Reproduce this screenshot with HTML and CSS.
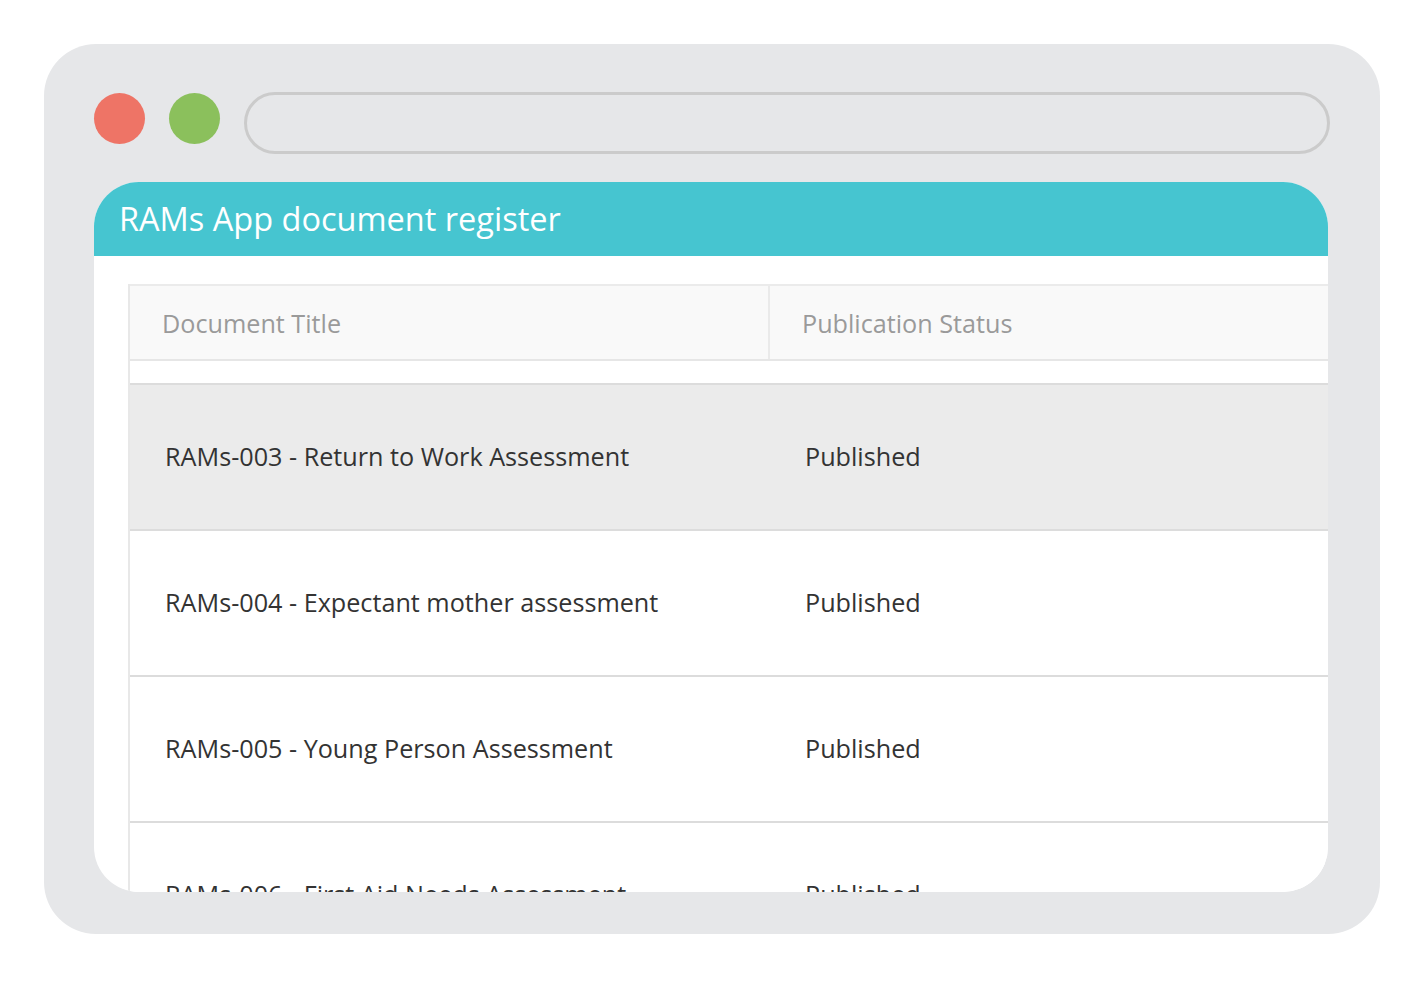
FILE: index.html
```html
<!DOCTYPE html>
<html lang="en">
<head>
<meta charset="utf-8">
<title>RAMs App document register</title>
<link rel="stylesheet" href="styles.css">
</head>
<body>
<div class="frame">
  <div class="topbar">
    <span class="dot dot-red"></span>
    <span class="dot dot-green"></span>
    <div class="address"></div>
  </div>
  <div class="card">
    <div class="card-head">RAMs App document register</div>
    <div class="card-body">
      <div class="table">
        <div class="thead">
          <div class="th th-title">Document Title</div>
          <div class="th th-status">Publication Status</div>
        </div>
        <div class="spacer"></div>
        <div class="row row-hover">
          <div class="td td-title">RAMs-003 - Return to Work Assessment</div>
          <div class="td td-status">Published</div>
        </div>
        <div class="row">
          <div class="td td-title">RAMs-004 - Expectant mother assessment</div>
          <div class="td td-status">Published</div>
        </div>
        <div class="row">
          <div class="td td-title">RAMs-005 - Young Person Assessment</div>
          <div class="td td-status">Published</div>
        </div>
        <div class="row">
          <div class="td td-title">RAMs-006 - First Aid Needs Assessment</div>
          <div class="td td-status">Published</div>
        </div>
      </div>
    </div>
  </div>
</div>
</body>
</html>
```
FILE: styles.css
```css
* { box-sizing: border-box; }
html, body { margin: 0; padding: 0; background: #ffffff; }
body { font-family: "Open Sans", "Noto Sans", sans-serif; }

.frame {
  margin: 44px 0 0 44px;
  width: 1336px;
  height: 890px;
  background: #e6e7e9;
  border-radius: 52px;
  padding: 48px 52px 42px 50px;
  display: flex;
  flex-direction: column;
}

.topbar {
  display: flex;
  align-items: flex-start;
  height: 62px;
  flex: 0 0 auto;
}
.dot {
  width: 51px;
  height: 51px;
  border-radius: 50%;
  margin-top: 1px;
  flex: 0 0 auto;
}
.dot-red { background: #ee7466; }
.dot-green { background: #8bc05c; margin-left: 24px; }
.address {
  margin-left: 24px;
  flex: 1 1 auto;
  margin-right: -2px;
  height: 62px;
  border: 3px solid #cbcbcb;
  border-radius: 31px;
}

.card {
  margin-top: 28px;
  flex: 1 1 auto;
  background: #ffffff;
  border-radius: 45px;
  overflow: hidden;
  display: flex;
  flex-direction: column;
}
.card-head {
  height: 74px;
  background: #46c5d0;
  color: #ffffff;
  font-size: 32.5px;
  line-height: 74px;
  padding-left: 25px;
  flex: 0 0 auto;
}
.card-body {
  padding: 28px 0 0 34px;
}

.table {
  border-left: 2px solid #e8e8e8;
}
.thead {
  display: flex;
  height: 77px;
  background: #f9f9f9;
  border-top: 2px solid #ebebeb;
  border-bottom: 2px solid #e6e6e6;
}
.th {
  display: flex;
  align-items: center;
  font-size: 25.2px;
  color: #9a9a9a;
}
.th-title {
  width: 640px;
  padding-left: 32px;
  border-right: 2px solid #eaeaea;
}
.th-status {
  padding-left: 32px;
}
.spacer { height: 22px; }

.row {
  display: flex;
  height: 146px;
  border-top: 2px solid #dcdcdc;
  background: #ffffff;
}
.row-hover { background: #ebebeb; }
.td {
  display: flex;
  align-items: center;
  font-size: 25.2px;
  color: #333333;
  padding-bottom: 2px;
}
.td-title {
  width: 642px;
  padding-left: 35px;
}
.td-status {
  padding-left: 33px;
}
```
